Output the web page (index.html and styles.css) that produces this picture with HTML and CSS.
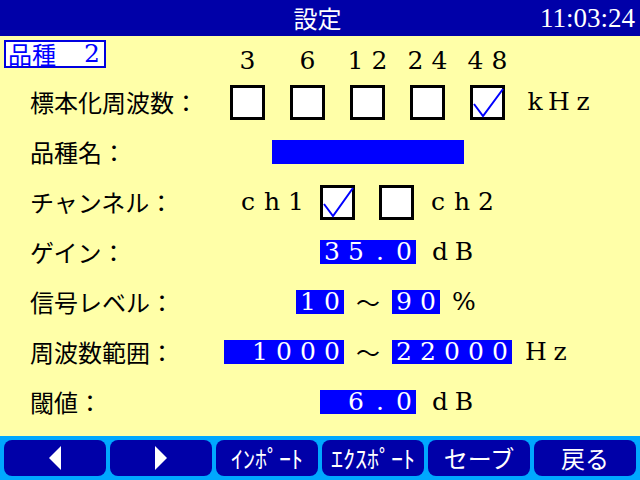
FILE: index.html
```html
<!DOCTYPE html>
<html lang="ja">
<head>
<meta charset="utf-8">
<title>設定</title>
<link rel="stylesheet" href="styles.css">
</head>
<body>
<div class="screen">
  <header class="titlebar">
    <span class="spacer"></span>
    <h1 class="title">設定</h1>
    <span class="clock">11:03:24</span>
  </header>

  <main class="panel">
    <div class="top">
      <div class="lead">
        <div class="badge"><span class="jp">品種</span><span class="cells"><i></i><i>2</i></span></div>
      </div>
      <div class="opts heads">
        <span class="slot"><span class="cells"><i>3</i></span></span>
        <span class="slot"><span class="cells"><i>6</i></span></span>
        <span class="slot"><span class="cells"><i>1</i><i>2</i></span></span>
        <span class="slot"><span class="cells"><i>2</i><i>4</i></span></span>
        <span class="slot"><span class="cells"><i>4</i><i>8</i></span></span>
      </div>
    </div>

    <div class="row">
      <span class="label">標本化周波数：</span>
      <div class="opts rate">
        <span class="box"></span>
        <span class="box"></span>
        <span class="box"></span>
        <span class="box"></span>
        <span class="box"><svg class="tick" viewBox="0 0 35 35"><polyline points="4,19 13,31 33,4"/></svg></span>
      </div>
      <span class="cells unit-khz"><i>k</i><i>H</i><i>z</i></span>
    </div>

    <div class="row">
      <span class="label">品種名：</span>
      <span class="namebar"></span>
    </div>

    <div class="row">
      <span class="label">チャンネル：</span>
      <span class="cells ch1"><i>c</i><i>h</i><i>1</i></span>
      <span class="box box-ch1"><svg class="tick" viewBox="0 0 35 35"><polyline points="4,19 13,31 33,3"/></svg></span>
      <span class="box box-ch2"></span>
      <span class="cells unit"><i>c</i><i>h</i><i>2</i></span>
    </div>

    <div class="row">
      <span class="label">ゲイン：</span>
      <span class="field w4 at-320"><span class="cells"><i>3</i><i>5</i><i>.</i><i>0</i></span></span>
      <span class="cells unit"><i>d</i><i>B</i></span>
    </div>

    <div class="row">
      <span class="label">信号レベル：</span>
      <span class="field w2 at-296"><span class="cells"><i>1</i><i>0</i></span></span>
      <span class="wave">～</span>
      <span class="field w2"><span class="cells"><i>9</i><i>0</i></span></span>
      <span class="cells unit"><i>%</i></span>
    </div>

    <div class="row">
      <span class="label">周波数範囲：</span>
      <span class="field w5 at-224"><span class="cells"><i>1</i><i>0</i><i>0</i><i>0</i></span></span>
      <span class="wave">～</span>
      <span class="field w5"><span class="cells"><i>2</i><i>2</i><i>0</i><i>0</i><i>0</i></span></span>
      <span class="cells unit"><i>H</i><i>z</i></span>
    </div>

    <div class="row">
      <span class="label">閾値：</span>
      <span class="field w4 at-320"><span class="cells"><i>6</i><i>.</i><i>0</i></span></span>
      <span class="cells unit"><i>d</i><i>B</i></span>
    </div>
  </main>

  <footer class="keys">
    <button class="key" type="button"><svg class="arrow" viewBox="0 0 12 24"><polygon points="12,0 0,12 12,24"/></svg></button>
    <button class="key" type="button"><svg class="arrow" viewBox="0 0 12 24"><polygon points="0,0 12,12 0,24"/></svg></button>
    <button class="key" type="button">ｲﾝﾎﾟｰﾄ</button>
    <button class="key" type="button">ｴｸｽﾎﾟｰﾄ</button>
    <button class="key" type="button">セーブ</button>
    <button class="key" type="button">戻る</button>
  </footer>
</div>
</body>
</html>
```

FILE: styles.css
```css
html, body {
  margin: 0;
  padding: 0;
}

body {
  width: 640px;
  height: 480px;
  overflow: hidden;
  font-family: "Noto Sans CJK JP", "DejaVu Sans", sans-serif;
  font-size: 24px;
  line-height: 24px;
}

.screen {
  width: 640px;
  height: 480px;
  display: flex;
  flex-direction: column;
  background: #ffffa8;
}

/* title bar */
.titlebar {
  height: 36px;
  flex: 0 0 36px;
  background: #0000a8;
  color: #fff;
  display: grid;
  grid-template-columns: 1fr auto 1fr;
  align-items: center;
  padding-right: 5px;
}

.title {
  margin: 0;
  font-size: 24px;
  font-weight: normal;
  line-height: 24px;
}

.clock {
  justify-self: end;
  font-family: "Liberation Serif", serif;
  font-size: 27px;
  line-height: 24px;
}

/* content panel */
.panel {
  height: 400px;
  flex: 0 0 400px;
  color: #000;
}

.top {
  height: 41px;
  box-sizing: border-box;
  padding-top: 4px;
  display: flex;
  align-items: flex-start;
}

.lead {
  width: 200px;
  flex: 0 0 200px;
  padding-left: 4px;
  box-sizing: border-box;
}

.badge {
  width: 102px;
  height: 28px;
  box-sizing: border-box;
  border: 2px solid #0000e0;
  background: #fff;
  color: #0000ff;
  padding-left: 2px;
  display: flex;
  align-items: center;
}

.heads {
  margin-top: 9px;
}

.opts {
  display: flex;
  gap: 25px;
  margin-left: 30px;
}

.slot {
  width: 35px;
  display: flex;
  justify-content: center;
}

.row {
  height: 50px;
  display: flex;
  align-items: center;
}

.label {
  width: 200px;
  flex: 0 0 200px;
  padding-left: 30px;
  box-sizing: border-box;
  white-space: nowrap;
}

/* character cells: full-width style text */
.cells {
  display: inline-flex;
  font-family: "DejaVu Serif", serif;
  font-size: 25px;
  line-height: 24px;
}

.cells i {
  width: 24px;
  flex: 0 0 24px;
  text-align: center;
  font-style: normal;
}

.unit {
  margin-left: 12px;
}

.unit-khz {
  margin-left: 18px;
}

.ch1 {
  margin-left: 36px;
}

/* check boxes */
.box {
  width: 35px;
  height: 35px;
  flex: 0 0 35px;
  box-sizing: border-box;
  border: 3px solid #000;
  background: #fff;
}

.box-ch1 {
  margin-left: 12px;
}

.box-ch2 {
  margin-left: 24px;
}

.tick {
  display: block;
  width: 35px;
  height: 35px;
  margin: -3px;
  overflow: visible;
}

.tick polyline {
  fill: none;
  stroke: #0000ff;
  stroke-width: 2;
}

/* blue value fields */
.namebar {
  width: 192px;
  height: 24px;
  margin-left: 72px;
  background: #0000ff;
}

.field {
  height: 24px;
  display: flex;
  justify-content: flex-end;
  background: #0000ff;
  color: #fff;
}

.w2 { width: 48px; }
.w4 { width: 96px; }
.w5 { width: 120px; }

.at-320 { margin-left: 120px; }
.at-296 { margin-left: 96px; }
.at-224 { margin-left: 24px; }

.wave {
  width: 24px;
  margin: 0 12px;
  text-align: center;
}

/* bottom keys */
.keys {
  height: 44px;
  flex: 0 0 44px;
  box-sizing: border-box;
  padding: 4px;
  display: flex;
  gap: 4px;
  background: #00a8ff;
}

.key {
  flex: 0 0 102px;
  height: 36px;
  margin: 0;
  padding: 0;
  border: none;
  border-radius: 8px;
  background: #0000a8;
  color: #fff;
  font-family: "Noto Sans CJK JP", sans-serif;
  font-size: 24px;
  line-height: 24px;
  display: flex;
  align-items: center;
  justify-content: center;
}

.arrow {
  width: 12px;
  height: 24px;
  display: block;
}

.arrow polygon {
  fill: #fff;
}
```
